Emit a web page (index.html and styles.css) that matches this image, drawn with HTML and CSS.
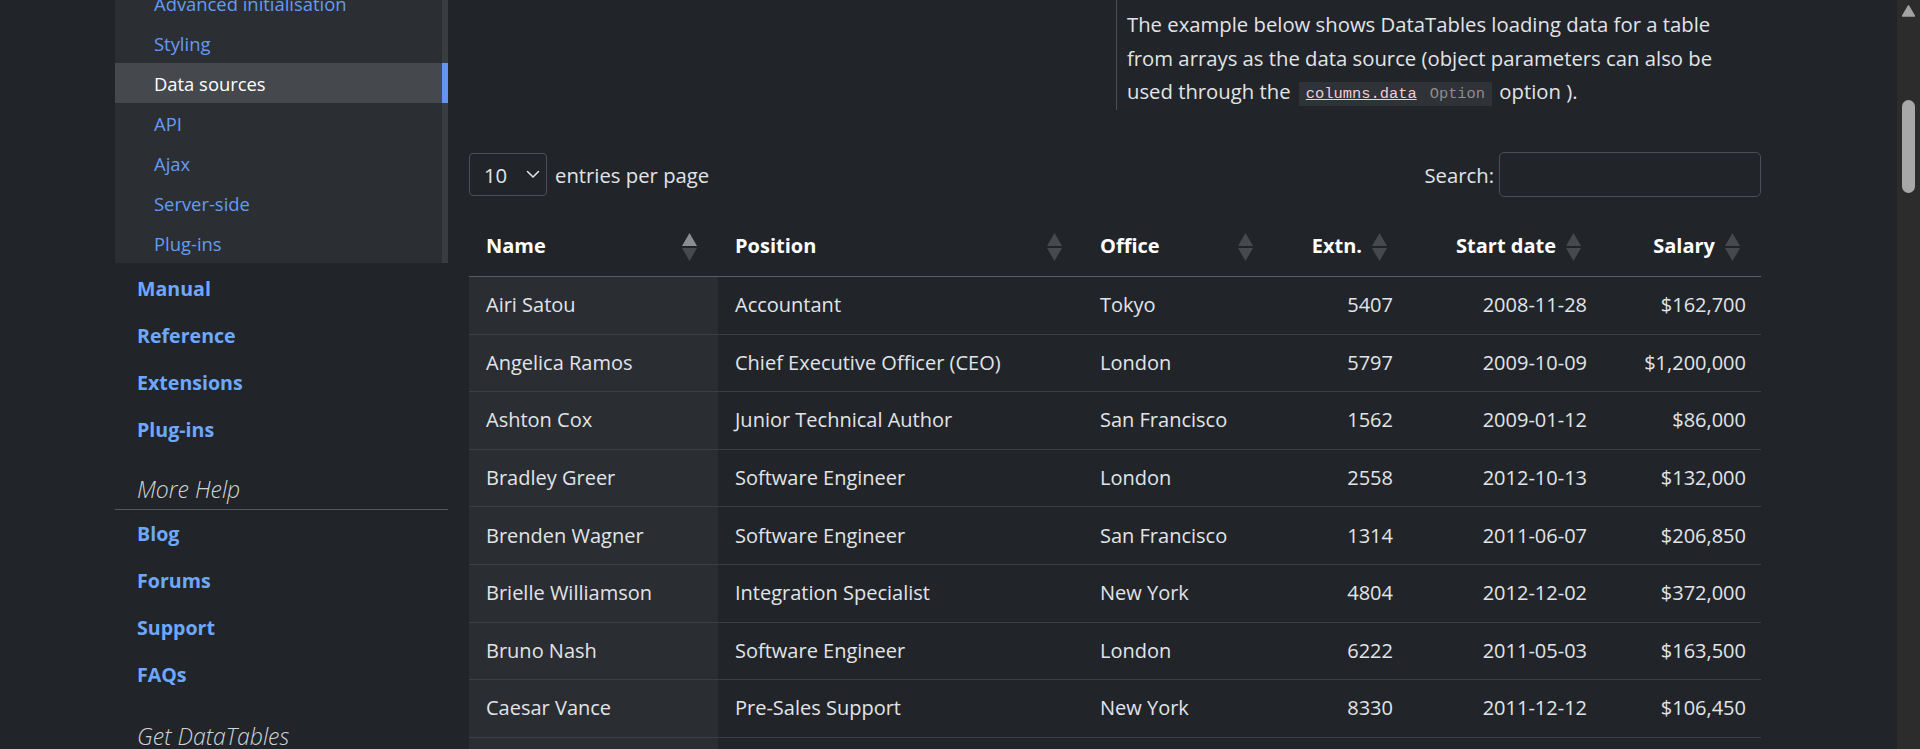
FILE: index.html
```html
<!DOCTYPE html>
<html lang="en">
<head>
<meta charset="utf-8">
<title>DataTables example - Data sources</title>
<link rel="stylesheet" href="styles.css">
</head>
<body>
<div class="page">
  <aside class="sidebar">
    <ul class="submenu">
      <li><a href="#">Advanced initialisation</a></li>
      <li><a href="#">Styling</a></li>
      <li class="active"><a href="#">Data sources</a></li>
      <li><a href="#">API</a></li>
      <li><a href="#">Ajax</a></li>
      <li><a href="#">Server-side</a></li>
      <li><a href="#">Plug-ins</a></li>
    </ul>
    <ul class="mainnav">
      <li><a href="#">Manual</a></li>
      <li><a href="#">Reference</a></li>
      <li><a href="#">Extensions</a></li>
      <li><a href="#">Plug-ins</a></li>
    </ul>
    <h3 class="side-heading">More Help</h3>
    <ul class="mainnav help">
      <li><a href="#">Blog</a></li>
      <li><a href="#">Forums</a></li>
      <li><a href="#">Support</a></li>
      <li><a href="#">FAQs</a></li>
    </ul>
    <h3 class="side-heading last">Get DataTables</h3>
  </aside>

  <main class="content">
    <div class="intro">
      <div class="intro-left"></div>
      <div class="intro-right">
        <p>The example below shows DataTables loading data for a table from arrays as the data source (object parameters can also be used through the <code class="tag"><a href="#" class="tag-name">columns.data</a><span class="tag-type">Option</span></code> option ).</p>
      </div>
    </div>

    <div class="toolbar">
      <div class="length">
        <div class="select"><span>10</span><svg width="14" height="9" viewBox="0 0 14 9"><path d="M1.5 1.5 L7 7 L12.5 1.5" fill="none" stroke="#dee2e6" stroke-width="1.6" stroke-linecap="round" stroke-linejoin="round"/></svg></div>
        <span>entries per page</span>
      </div>
      <label class="search">Search:<input type="search" class="search-input"></label>
    </div>

    <table class="datatable">
      <colgroup>
        <col class="c-name"><col class="c-pos"><col class="c-office"><col class="c-extn"><col class="c-date"><col class="c-salary">
      </colgroup>
      <thead>
        <tr>
          <th><div class="th-inner"><span>Name</span><svg class="sort" width="15" height="29" viewBox="0 0 15 29"><polygon points="7.5,0 15,13 0,13" fill="#8b8d90"/><polygon points="0,15 15,15 7.5,28" fill="#46494e"/></svg></div></th>
          <th><div class="th-inner"><span>Position</span><svg class="sort" width="15" height="29" viewBox="0 0 15 29"><polygon points="7.5,0 15,13 0,13" fill="#46494e"/><polygon points="0,15 15,15 7.5,28" fill="#46494e"/></svg></div></th>
          <th><div class="th-inner"><span>Office</span><svg class="sort" width="15" height="29" viewBox="0 0 15 29"><polygon points="7.5,0 15,13 0,13" fill="#46494e"/><polygon points="0,15 15,15 7.5,28" fill="#46494e"/></svg></div></th>
          <th class="num"><div class="th-inner"><span>Extn.</span><svg class="sort" width="15" height="29" viewBox="0 0 15 29"><polygon points="7.5,0 15,13 0,13" fill="#46494e"/><polygon points="0,15 15,15 7.5,28" fill="#46494e"/></svg></div></th>
          <th class="num"><div class="th-inner"><span>Start date</span><svg class="sort" width="15" height="29" viewBox="0 0 15 29"><polygon points="7.5,0 15,13 0,13" fill="#46494e"/><polygon points="0,15 15,15 7.5,28" fill="#46494e"/></svg></div></th>
          <th class="num"><div class="th-inner"><span>Salary</span><svg class="sort" width="15" height="29" viewBox="0 0 15 29"><polygon points="7.5,0 15,13 0,13" fill="#46494e"/><polygon points="0,15 15,15 7.5,28" fill="#46494e"/></svg></div></th>
        </tr>
      </thead>
      <tbody>
        <tr><td class="sorted">Airi Satou</td><td>Accountant</td><td>Tokyo</td><td class="num">5407</td><td class="num">2008-11-28</td><td class="num">$162,700</td></tr>
        <tr><td class="sorted">Angelica Ramos</td><td>Chief Executive Officer (CEO)</td><td>London</td><td class="num">5797</td><td class="num">2009-10-09</td><td class="num">$1,200,000</td></tr>
        <tr><td class="sorted">Ashton Cox</td><td>Junior Technical Author</td><td>San Francisco</td><td class="num">1562</td><td class="num">2009-01-12</td><td class="num">$86,000</td></tr>
        <tr><td class="sorted">Bradley Greer</td><td>Software Engineer</td><td>London</td><td class="num">2558</td><td class="num">2012-10-13</td><td class="num">$132,000</td></tr>
        <tr><td class="sorted">Brenden Wagner</td><td>Software Engineer</td><td>San Francisco</td><td class="num">1314</td><td class="num">2011-06-07</td><td class="num">$206,850</td></tr>
        <tr><td class="sorted">Brielle Williamson</td><td>Integration Specialist</td><td>New York</td><td class="num">4804</td><td class="num">2012-12-02</td><td class="num">$372,000</td></tr>
        <tr><td class="sorted">Bruno Nash</td><td>Software Engineer</td><td>London</td><td class="num">6222</td><td class="num">2011-05-03</td><td class="num">$163,500</td></tr>
        <tr><td class="sorted">Caesar Vance</td><td>Pre-Sales Support</td><td>New York</td><td class="num">8330</td><td class="num">2011-12-12</td><td class="num">$106,450</td></tr>
        <tr><td class="sorted">Cara Stevens</td><td>Sales Assistant</td><td>New York</td><td class="num">3600</td><td class="num">2011-12-06</td><td class="num">$145,600</td></tr>
      </tbody>
    </table>
  </main>

  <div class="scrollbar">
    <svg class="sb-arrow" width="13" height="12" viewBox="0 0 13 12"><polygon points="6.5,1 12.5,11 0.5,11" fill="#a3a3a3" stroke="#a3a3a3" stroke-linejoin="round" stroke-width="1.5"/></svg>
    <div class="sb-thumb"></div>
  </div>
</div>
</body>
</html>
```

FILE: styles.css
```css
html, body {
  margin: 0;
  padding: 0;
  height: 749px;
  overflow: hidden;
  background: #212529;
  color: #e1e4e8;
  font-family: "Open Sans", "Noto Sans", "DejaVu Sans", sans-serif;
}

.page {
  display: flex;
  height: 749px;
  overflow: hidden;
}

/* ---------- Sidebar ---------- */
.sidebar {
  width: 333px;
  margin-left: 115px;
  flex-shrink: 0;
}

.submenu {
  list-style: none;
  margin: -17px 0 0;
  padding: 0;
  background: #2b2e33;
}

.submenu li {
  height: 40px;
  display: flex;
  align-items: center;
  padding-left: 39px;
  border-right: 6px solid #393c41;
  font-size: 18.4px;
}

.submenu a {
  color: #649cf2;
  text-decoration: none;
}

.submenu li.active {
  background: #45484d;
  border-right-color: #5f96ee;
}

.submenu li.active a {
  color: #ffffff;
}

.mainnav {
  list-style: none;
  margin: 2px 0 0;
  padding: 0;
}

.mainnav.help {
  margin-top: 0;
}

.mainnav li {
  height: 47px;
  display: flex;
  align-items: center;
  padding-left: 22px;
  font-size: 19.6px;
  font-weight: 700;
}

.mainnav a {
  color: #6ea8fe;
  text-decoration: none;
}

.side-heading {
  margin: 21px 0 0;
  padding: 0 0 5px 22px;
  line-height: 30px;
  font-size: 23px;
  font-style: italic;
  font-weight: 300;
  color: #d2d4d7;
  border-bottom: 1px solid #55585d;
}

.side-heading.last {
  margin-top: 23px;
  border-bottom: none;
}

/* ---------- Content ---------- */
.content {
  width: 1292px;
  margin-left: 21px;
  flex-shrink: 0;
}

.intro {
  display: grid;
  grid-template-columns: 647px 1fr;
  height: 110px;
}

.intro-right {
  border-left: 1px solid #4b4e53;
  padding: 8px 24px 0 10px;
}

.intro-right p {
  margin: 0;
  font-size: 20.3px;
  line-height: 33.5px;
}

.tag {
  display: inline-block;
  background: #2f3236;
  padding: 0 7px;
  height: 24px;
  line-height: 24px;
  font-family: "Liberation Mono", "DejaVu Sans Mono", monospace;
  font-size: 15.4px;
  margin: 0 2px 0 3px;
  vertical-align: middle;
}

.tag-name {
  color: #f1cddc;
  text-decoration: underline;
}

.tag-type {
  color: #8b8d90;
  margin-left: 13px;
}

.toolbar {
  display: flex;
  justify-content: space-between;
  align-items: center;
  margin-top: 42px;
  height: 45px;
}

.length {
  display: flex;
  align-items: center;
  gap: 8px;
  font-size: 20.3px;
}

.select {
  box-sizing: border-box;
  width: 78px;
  height: 43px;
  border: 1px solid #4b4f55;
  border-radius: 4px;
  display: flex;
  align-items: center;
  justify-content: space-between;
  padding: 0 6px 0 14px;
}

.search {
  display: flex;
  align-items: center;
  gap: 5px;
  font-size: 20.3px;
}

.search-input {
  box-sizing: border-box;
  width: 262px;
  height: 45px;
  border: 1px solid #4b4f55;
  border-radius: 5px;
  background: transparent;
  color: #dee2e6;
  margin: 0;
}

/* ---------- Table ---------- */
.datatable {
  margin-top: 20px;
  width: 1292px;
  border-collapse: collapse;
  table-layout: fixed;
  font-size: 20px;
}

.c-name { width: 249px; }
.c-pos { width: 365px; }
.c-office { width: 191px; }
.c-extn { width: 134px; }
.c-date { width: 194px; }
.c-salary { width: 159px; }

.datatable th {
  font-weight: 700;
  color: #ffffff;
  text-align: left;
  line-height: 30px;
  padding: 13px 21px 14px 17px;
  border-bottom: 1px solid #5a5d63;
}

.th-inner {
  display: flex;
  align-items: center;
  justify-content: space-between;
}

.datatable th.num .th-inner {
  justify-content: flex-end;
  gap: 10px;
}

.sort {
  flex-shrink: 0;
  margin-top: 3px;
}

.datatable td {
  line-height: 30px;
  padding: 13.3px 15px 13.3px 17px;
  border-top: 1px solid #3b3e43;
  white-space: nowrap;
}

.datatable tbody tr:first-child td {
  border-top: none;
}

.datatable td.num {
  text-align: right;
}

.datatable td.sorted {
  background: #2a2d31;
}

/* ---------- Scrollbar ---------- */
.scrollbar {
  margin-left: auto;
  width: 23px;
  flex-shrink: 0;
  background: #2c2c2c;
  display: flex;
  flex-direction: column;
  align-items: center;
}

.sb-arrow {
  margin-top: 5px;
}

.sb-thumb {
  margin-top: 83px;
  width: 13px;
  height: 93px;
  border-radius: 7px;
  background: #a8a8a8;
}
```
